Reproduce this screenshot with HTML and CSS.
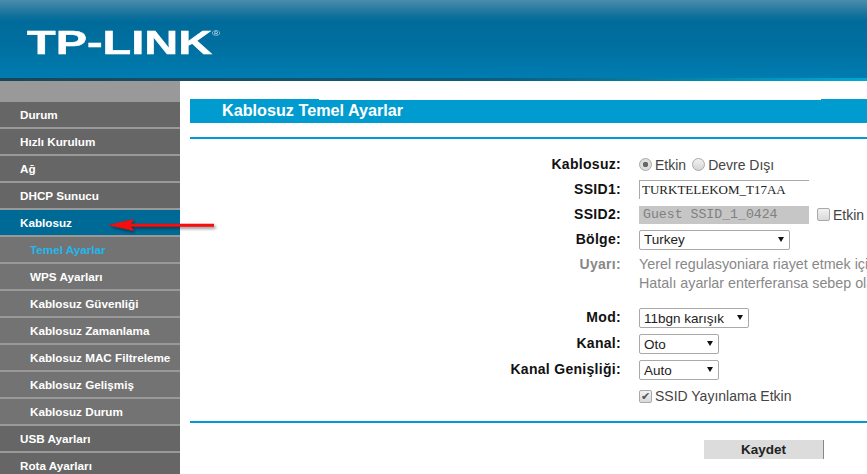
FILE: index.html
```html
<!DOCTYPE html>
<html lang="en">
<head>
  <meta charset="UTF-8" />
  <title>TP-LINK Kablosuz Temel Ayarlar</title>
  <link rel="stylesheet" href="styles.css">
</head>
<body>
  <div class="top-bar">
    <div class="logo">TP-LINK<span class="logo-mark">®</span></div>
  </div>

  <div class="main">
    <ul class="menu">
      <li class="menu-item">Durum</li>
      <li class="menu-item">Hızlı Kurulum</li>
      <li class="menu-item">Ağ</li>
      <li class="menu-item">DHCP Sunucu</li>
      <li class="menu-item menu-open">Kablosuz</li>
      <li class="menu-item menu-sub menu-current">Temel Ayarlar</li>
      <li class="menu-item menu-sub">WPS Ayarları</li>
      <li class="menu-item menu-sub">Kablosuz Güvenliği</li>
      <li class="menu-item menu-sub">Kablosuz Zamanlama</li>
      <li class="menu-item menu-sub">Kablosuz MAC Filtreleme</li>
      <li class="menu-item menu-sub">Kablosuz Gelişmiş</li>
      <li class="menu-item menu-sub">Kablosuz Durum</li>
      <li class="menu-item">USB Ayarları</li>
      <li class="menu-item">Rota Ayarları</li>
    </ul>

    <div class="content">
      <h2 class="page-title">Kablosuz Temel Ayarlar</h2>
      <div class="rule"></div>

      <div class="settings">
        <div class="row">
          <div class="field-label">Kablosuz:</div>
          <div class="field-value">
            <input class="radio" type="radio" name="wifi" checked> Etkin
            <input class="radio" type="radio" name="wifi"> Devre Dışı
          </div>
        </div>

        <div class="row">
          <div class="field-label">SSID1:</div>
          <div class="field-value">
            <input class="text-box" type="text" value="TURKTELEKOM_T17AA">
          </div>
        </div>

        <div class="row">
          <div class="field-label">SSID2:</div>
          <div class="field-value">
            <input class="text-box text-off" type="text" value="Guest SSID_1_0424" disabled>
            <input class="check check-etkin" type="checkbox"> Etkin
          </div>
        </div>

        <div class="row">
          <div class="field-label">Bölge:</div>
          <div class="field-value">
            <span class="select-wrap select-wide"><select><option>Turkey</option></select></span>
          </div>
        </div>

        <div class="row row-note">
          <div class="field-label label-muted">Uyarı:</div>
          <div class="note">Yerel regulasyoniara riayet etmek için doğru ülkeyi seçiniz.<br>Hatalı ayarlar enterferansa sebep olabilir.</div>
        </div>

        <div class="row row-tall">
          <div class="field-label">Mod:</div>
          <div class="field-value">
            <span class="select-wrap select-mid"><select class="select-mode"><option>11bgn karışık</option></select></span>
          </div>
        </div>

        <div class="row row-tall">
          <div class="field-label">Kanal:</div>
          <div class="field-value">
            <span class="select-wrap select-small"><select><option>Oto</option></select></span>
          </div>
        </div>

        <div class="row row-tall">
          <div class="field-label">Kanal Genişliği:</div>
          <div class="field-value">
            <span class="select-wrap select-small"><select><option>Auto</option></select></span>
          </div>
        </div>

        <div class="row row-tall">
          <div class="field-label"></div>
          <div class="field-value">
            <input class="check check-ssid" type="checkbox" checked disabled> SSID Yayınlama Etkin
          </div>
        </div>
      </div>

      <div class="rule rule-bottom"></div>
      <div class="actions">
        <button class="save-btn" type="button">Kaydet</button>
      </div>
    </div>
  </div>

  <!-- red arrow pasted over the menu -->
  <svg class="arrow" width="120" height="24" viewBox="0 0 120 24">
    <defs>
      <filter id="arrowShadow" x="-10%" y="-50%" width="120%" height="220%">
        <feDropShadow dx="1.500" dy="2" stdDeviation="1.800" flood-color="#000" flood-opacity="0.45" />
      </filter>
    </defs>
    <path d="M3 11 L29 5 L26 9.700 L109 9.700 L109 12.700 L26 12.700 L29 17 Z" fill="#f60808" filter="url(#arrowShadow)" />
  </svg>
</body>
</html>
```

FILE: styles.css
```css
html,
body {
  height: 474px;
  overflow: hidden;
}
body {
  margin: 0;
  position: relative;
  background: #fff;
  font-family: 'Liberation Sans', Arial, sans-serif;
  color: #333;
}
.top-bar {
  height: 78px;
  border-bottom: 3px solid;
  border-image: linear-gradient(to right, #1d4457 0, #0a5f80 500px, #00a9d2 867px) 1;
  background: linear-gradient(to bottom, #4a8cab 0, #16739d 14px, #006b9b 21px, #006f9f 45px, #007cb1 78px);
  overflow: hidden;
}
.logo {
  margin: 15px 0 0 27px;
  font-size: 34px;
  line-height: 38px;
  font-weight: bold;
  color: #fff;
  -webkit-text-stroke: 0.5px #fff;
  transform: scaleX(1.38);
  transform-origin: left top;
  white-space: nowrap;
}
.logo-mark {
  font-size: 8px;
  font-weight: normal;
  vertical-align: 18px;
  color: #cfe3ee;
  -webkit-text-stroke: 0;
}
.main {
  display: flex;
}
.menu {
  width: 180px;
  flex: none;
  margin: 0;
  padding: 21px 0 0 0;
  list-style: none;
  background: #999;
}
.menu-item {
  height: 25px;
  margin-bottom: 2px;
  padding-left: 20px;
  background: #666;
  color: #fff;
  font-size: 11.700px;
  font-weight: bold;
  line-height: 25px;
  white-space: nowrap;
}
.menu-open {
  background: #006a96;
}
.menu-sub {
  padding-left: 30px;
  background: #737373;
}
.menu-current {
  color: #22b8ec;
}
.content {
  flex: 1;
  min-width: 0;
  padding: 19px 0 0 10px;
  overflow: hidden;
}
.page-title {
  position: relative;
  margin: 0;
  height: 23px;
  padding-left: 32px;
  background: #009ccf;
  color: #fff;
  font-size: 16.200px;
  line-height: 20px;
  font-weight: bold;
}
/* the bar sticks up one pixel at both ends */
.page-title::before,
.page-title::after {
  content: "";
  position: absolute;
  top: -1px;
  height: 1px;
  background: #009ccf;
}
.page-title::before {
  left: 0;
  width: 129px;
}
.page-title::after {
  right: 0;
  width: 46px;
}
.rule {
  height: 2px;
  margin-top: 14px;
  background: #009ccf;
}
.settings {
  margin-top: 13px;
  font-size: 14px;
  white-space: nowrap;
}
.row {
  display: flex;
  height: 25px;
}
.row-note {
  height: 53px;
}
.row-tall {
  height: 26px;
}
.field-label {
  width: 431px;
  flex: none;
  margin-right: 18px;
  text-align: right;
  font-weight: bold;
  letter-spacing: 0.3px;
  color: #111;
  line-height: 25px;
}
.label-muted {
  color: #888;
}
.field-value {
  color: #444;
  display: flex;
  align-items: center;
  gap: 3px;
}
.note {
  padding-top: 3px;
  font-size: 14.300px;
  line-height: 19px;
  color: #888;
}
.text-box {
  width: 170px;
  height: 19px;
  box-sizing: border-box;
  margin: 0;
  padding: 0 2px;
  border: 0;
  border-top: 1px solid #aaa;
  border-left: 1px solid #aaa;
  font-family: 'Liberation Serif', serif;
  font-size: 13px;
  color: #222;
  background: #fff;
}
.text-off {
  height: 18px;
  border: 0;
  padding-left: 4px;
  background: #c6c6c6;
  font-family: 'Liberation Mono', monospace;
  font-size: 13.200px;
  color: #808080;
}
.radio {
  appearance: none;
  width: 13px;
  height: 13px;
  margin: 0;
  border: 1px solid #a9a9a9;
  border-radius: 50%;
  background: linear-gradient(#f2f2f2, #d4d4d4);
  box-sizing: border-box;
}
.radio:checked {
  background: radial-gradient(circle, #666 0, #666 2.500px, #dedede 3px);
}
.radio + .radio {
  margin-left: 3px;
}
.check {
  appearance: none;
  width: 13px;
  height: 13px;
  margin: 0 2px 0 0;
  border: 1px solid #a9a9a9;
  border-radius: 2px;
  background: linear-gradient(#f2f2f2, #d9d9d9);
  box-sizing: border-box;
  font-size: 11px;
  line-height: 11px;
  color: #555;
  text-align: center;
}
.check:checked::before {
  content: "✔";
}
.check-etkin {
  margin: 0 0 0 5px;
}
.check-ssid {
  margin-right: 0;
}
.select-wrap {
  position: relative;
  display: inline-block;
  height: 20px;
}
.select-wrap::after {
  content: "";
  position: absolute;
  right: 6px;
  top: 7px;
  border-left: 3px solid transparent;
  border-right: 3px solid transparent;
  border-top: 5px solid #111;
  pointer-events: none;
}
.select-wrap select {
  appearance: none;
  display: block;
  width: 100%;
  height: 20px;
  margin: 0;
  padding: 0 0 0 4px;
  border: 1px solid #a9a9a9;
  border-radius: 2px;
  background: #fff;
  font-family: 'Liberation Sans', Arial, sans-serif;
  font-size: 13.500px;
  color: #222;
}
.select-mode {
  font-size: 13px;
}
.select-wide {
  width: 151px;
}
.select-mid {
  width: 110px;
}
.select-small {
  width: 80px;
}
.rule-bottom {
  margin-top: 12px;
}
.actions {
  padding: 17px 0 0 514px;
}
.save-btn {
  display: block;
  width: 120px;
  height: 19px;
  padding: 0;
  border: 0;
  border-right: 1px solid #888;
  background: #dcdcdc;
  font-family: 'Liberation Sans', Arial, sans-serif;
  font-size: 13.500px;
  font-weight: bold;
  color: #222;
}
.arrow {
  position: absolute;
  left: 105px;
  top: 214px;
}
```
